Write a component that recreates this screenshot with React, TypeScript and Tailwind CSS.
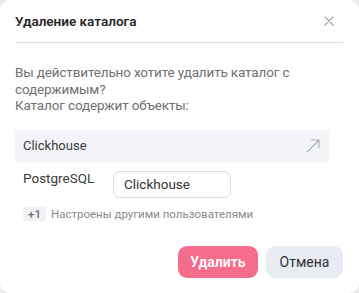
import React from 'react';

const CloseIcon: React.FC = () => (
  <svg width="10" height="10" viewBox="0 0 10 10" fill="none">
    <path d="M1 1L9 9M9 1L1 9" stroke="#a3a7b3" strokeWidth="1.3" strokeLinecap="round" />
  </svg>
);

const OpenIcon: React.FC = () => (
  <svg width="16" height="16" viewBox="0 0 16 16" fill="none">
    <path d="M2 14L14 2M6.5 2H14V9.5" stroke="#a9adb9" strokeWidth="1.1" strokeLinecap="round" />
  </svg>
);

const App: React.FC = () => {
  return (
    <div className="w-[359px] h-[293px] bg-[#ececec]" style={{ fontFamily: 'Roboto, "Noto Sans", sans-serif' }}>
      <div className="w-[359px] h-[293px] bg-white rounded-[10px] pt-[11px] pl-[15px] pr-[16px] flex flex-col">
        <div className="h-[20px] flex items-center justify-between">
          <h2 className="text-[13.5px] font-semibold text-[#262626]">Удаление каталога</h2>
          <button className="w-[16px] h-[16px] mr-[6px] flex items-center justify-center">
            <CloseIcon />
          </button>
        </div>
        <div className="mt-[11px] h-px bg-[#dcdee5]" />

        <p className="mt-[21px] text-[13.5px] leading-[16.5px] tracking-[-0.15px] text-[#707070] w-[320px]">
          Вы действительно хотите удалить каталог с содержимым?
          <br />
          Каталог содержит объекты:
        </p>

        <div className="mt-[16px] w-[314px] h-[33px] bg-[#f3f4f8] flex items-center justify-between pl-[8px] pr-[8px]">
          <span className="text-[13px] text-[#3a3a3a]">Clickhouse</span>
          <OpenIcon />
        </div>

        <div className="mt-[8px] flex items-start pl-[8px]">
          <span className="text-[13.5px] leading-[16px] mt-[-1px] text-[#3a3a3a] w-[90px]">PostgreSQL</span>
          <div className="w-[118px] h-[27px] border border-[#dcdee5] rounded-[7px] flex items-center pl-[10px]">
            <span className="text-[13.5px] text-[#333333]">Clickhouse</span>
          </div>
        </div>

        <div className="mt-[8px] flex items-center pl-[8px] gap-[5px]">
          <span className="h-[14px] px-[5px] rounded-[3px] bg-[#f0f1f5] text-[11.5px] leading-[14px] text-[#6e6e6e] font-medium">+1</span>
          <span className="text-[11.5px] text-[#8a8a8a]">Настроены другими пользователями</span>
        </div>

        <div className="mt-auto mb-[15px] flex justify-end gap-[8px]">
          <button className="w-[80px] h-[32px] rounded-[9px] bg-[#f56d8a] text-white text-[14px] font-semibold">Удалить</button>
          <button className="w-[77px] h-[32px] rounded-[9px] bg-[#e9ecf3] text-[#333333] text-[14px]">Отмена</button>
        </div>
      </div>
    </div>
  );
};

export default App;
